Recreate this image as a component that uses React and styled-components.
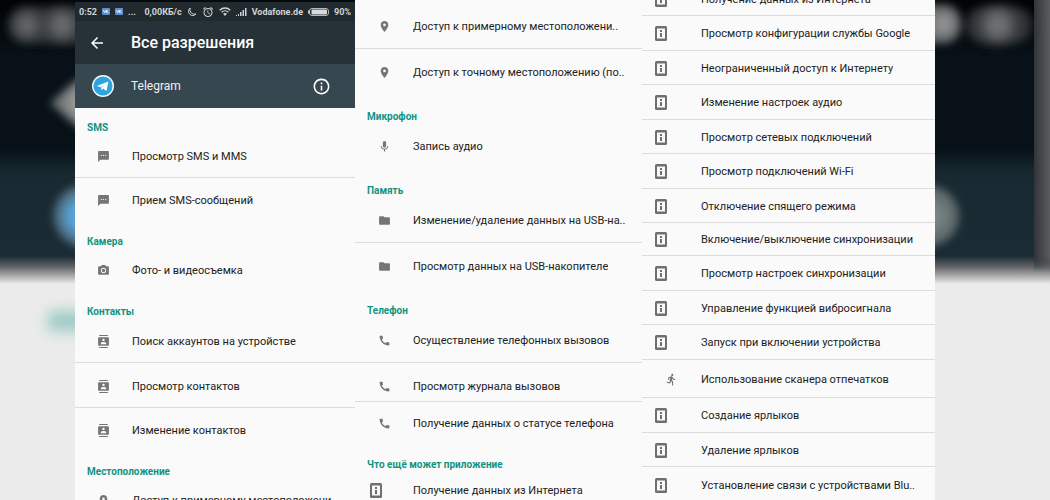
import styled, { createGlobalStyle } from "styled-components";
import {
  MdAlarm,
  MdArrowBack,
  MdCall,
  MdCameraAlt,
  MdContacts,
  MdDirectionsRun,
  MdFolder,
  MdInfoOutline,
  MdMic,
  MdPlace,
  MdTextsms,
} from "react-icons/md";

const GlobalStyle = createGlobalStyle`
  body {
    margin: 0;
    background: #ebebeb;
    font-family: Roboto, "Noto Sans", sans-serif;
  }
`;

const Page = styled.main`
  position: relative;
  height: 100vh;
  overflow: hidden;
  display: grid;
  grid-template-columns:
    minmax(0, 75fr) minmax(0, 280fr) minmax(0, 287fr) minmax(0, 293fr)
    minmax(0, 115fr);
`;

const Backdrop = styled.svg`
  position: absolute;
  inset: 0;
  width: 100%;
  height: 100%;
`;

const Column = styled.section`
  position: relative;
  background: #fafafa;
  overflow: hidden;
`;

const FirstColumn = styled(Column)`
  grid-column: 2;
  border-top: 2px solid #05090d;
`;

const MiddleColumn = styled(Column)`
  padding-top: 3px;
`;

const StatusBar = styled.div`
  height: 19px;
  padding: 0 4px;
  display: flex;
  align-items: center;
  justify-content: space-between;
  background: #212a2f;
  color: #cfd3d5;
  font-size: 9px;
  font-weight: 700;
  white-space: nowrap;
`;

const StatusGroup = styled.div`
  display: flex;
  align-items: center;
  gap: 5px;
`;

const AppBar = styled.header`
  height: 43px;
  padding-left: 13px;
  display: flex;
  align-items: center;
  gap: 25px;
  background: #263238;
  color: #fff;
`;

const BackButton = styled.button`
  display: flex;
  padding: 0;
  border: 0;
  background: none;
  color: inherit;
  font-size: 18px;
`;

const Title = styled.h1`
  margin: 0;
  font-size: 16px;
  font-weight: 500;
`;

const AppRow = styled.div`
  height: 44px;
  padding: 0 24px 0 17px;
  display: flex;
  align-items: center;
  gap: 17px;
  background: #37474f;
  color: #f0f2f3;
  font-size: 12px;
`;

const AppName = styled.span`
  flex: 1;
`;

const InfoButton = styled(BackButton)`
  color: #fff;
  font-size: 19px;
`;

const GroupTitle = styled.h2`
  box-sizing: border-box;
  height: ${(props) => props.$height}px;
  margin: 0;
  padding: ${(props) => props.$height - 12}px 12px 0;
  color: #109482;
  font-size: 10px;
  font-weight: 700;
  line-height: 12px;
  white-space: nowrap;
`;

const List = styled.ul`
  margin: 0;
  padding: 0;
  list-style: none;
`;

const WideList = styled(List)`
  margin-top: -18px;
`;

const Row = styled.li`
  box-sizing: border-box;
  height: ${(props) => props.$height}px;
  padding-top: ${(props) => props.$top}px;
  display: flex;
  align-items: center;
  border-bottom: 1px solid ${(props) => (props.$line ? "#dcdcdc" : "transparent")};
  color: #212121;
  font-size: 11px;
  white-space: nowrap;
`;

const IconCell = styled.span`
  flex: none;
  box-sizing: border-box;
  width: ${(props) => props.$width}px;
  padding-left: ${(props) => props.$indent}px;
  display: flex;
  color: #757575;
  font-size: 13px;
`;

const Label = styled.span`
  min-width: 0;
  overflow: hidden;
`;

function DeviceInfoIcon() {
  return (
    <svg width="12" height="15" viewBox="0 0 12 15" aria-hidden="true">
      <rect width="12" height="15" rx="1.5" fill="#6f6f6f" />
      <rect x="2" y="2.5" width="8" height="10" fill="#fafafa" />
      <rect x="5" y="4" width="2" height="2" fill="#6f6f6f" />
      <rect x="5" y="7" width="2" height="4" fill="#6f6f6f" />
    </svg>
  );
}

function TelegramLogo() {
  return (
    <svg width="22" height="22" viewBox="0 0 22 22" aria-hidden="true">
      <circle cx="11" cy="11" r="11" fill="#f4f9fc" />
      <circle cx="11" cy="11" r="9.6" fill="#2fa3dc" />
      <path d="M4.8 11 16.4 6.4 14.5 16l-3.4-2.4-1.7 1.7-.5-3Z" fill="#fff" />
      <path d="m8.9 12.3 5.2-4-4 4.5-.7 2.5Z" fill="#b9d9ec" />
    </svg>
  );
}

function VkBadge() {
  return (
    <svg width="8" height="7" viewBox="0 0 8 7" aria-hidden="true">
      <rect width="8" height="7" rx="1" fill="#5b8fd0" />
      <path d="M1.2 2.2 2.5 4.6 3.8 2.2M4.3 2v3M4.4 3.5 6.4 2.2M4.4 3.5 6.6 4.8" stroke="#fff" strokeWidth=".8" fill="none" />
    </svg>
  );
}

function MoonIcon() {
  return (
    <svg width="10" height="10" viewBox="0 0 10 10" aria-hidden="true">
      <path d="M3.2 1A4.2 4.2 0 1 0 9 7 4.6 4.6 0 0 1 3.2 1Z" fill="none" stroke="#cfd3d5" />
    </svg>
  );
}

function WifiIcon() {
  return (
    <svg width="12" height="9" viewBox="0 0 12 9" aria-hidden="true">
      <path d="M.7 3.2a7.6 7.6 0 0 1 10.6 0M2.6 5.2a5 5 0 0 1 6.8 0" fill="none" stroke="#cfd3d5" strokeWidth="1.4" />
      <path d="M4 6.8a3 3 0 0 1 4 0L6 9Z" fill="#cfd3d5" />
    </svg>
  );
}

function SignalIcon() {
  return (
    <svg width="11" height="8" viewBox="0 0 11 8" aria-hidden="true" fill="#cfd3d5">
      <rect y="7" width="1" height="1" />
      <rect x="2" y="6" width="1" height="2" />
      <rect x="4" y="4" width="1.5" height="4" />
      <rect x="6.5" y="2" width="1.5" height="6" />
      <rect x="9" width="1.5" height="8" />
    </svg>
  );
}

function BatteryIcon() {
  return (
    <svg width="21" height="8" viewBox="0 0 21 8" aria-hidden="true">
      <rect x="1.5" y=".5" width="19" height="7" rx="2.5" fill="none" stroke="#b4b9bb" />
      <rect x="3.5" y="1.5" width="15.5" height="5" rx="1" fill="#d8dbdc" />
      <rect y="2.5" width="1.5" height="3" fill="#cfd3d5" />
    </svg>
  );
}

const icons = {
  sms: MdTextsms,
  camera: MdCameraAlt,
  contacts: MdContacts,
  place: MdPlace,
  mic: MdMic,
  folder: MdFolder,
  call: MdCall,
  run: MdDirectionsRun,
  device: DeviceInfoIcon,
};

const firstGroups = [
  {
    title: "SMS",
    rows: [
      { icon: "sms", text: "Просмотр SMS и MMS", line: true },
      { icon: "sms", text: "Прием SMS-сообщений" },
    ],
  },
  { title: "Камера", rows: [{ icon: "camera", text: "Фото- и видеосъемка" }] },
  {
    title: "Контакты",
    rows: [
      { icon: "contacts", text: "Поиск аккаунтов на устройстве", line: true, height: 45 },
      { icon: "contacts", text: "Просмотр контактов", line: true, height: 45 },
      { icon: "contacts", text: "Изменение контактов", height: 44 },
    ],
  },
  {
    title: "Местоположение",
    rows: [{ icon: "place", text: "Доступ к примерному местоположени.." }],
  },
];

const middleGroups = [
  {
    rows: [
      { icon: "place", text: "Доступ к примерному местоположени..", line: true },
      { icon: "place", text: "Доступ к точному местоположению (по.." },
    ],
  },
  { title: "Микрофон", rows: [{ icon: "mic", text: "Запись аудио" }] },
  {
    title: "Память",
    rows: [
      { icon: "folder", text: "Изменение/удаление данных на USB-на..", line: true },
      { icon: "folder", text: "Просмотр данных на USB-накопителе" },
    ],
  },
  {
    title: "Телефон",
    rows: [
      { icon: "call", text: "Осуществление телефонных вызовов", line: true },
      { icon: "call", text: "Просмотр журнала вызовов", line: true, height: 39, top: 9 },
      { icon: "call", text: "Получение данных о статусе телефона", height: 41 },
    ],
  },
  {
    title: "Что ещё может приложение",
    rows: [{ icon: "device", text: "Получение данных из Интернета", height: 38, indent: 15 }],
  },
];

const otherRows = [
  { text: "Получение данных из Интернета", height: 34 },
  { text: "Просмотр конфигурации службы Google", height: 35 },
  { text: "Неограниченный доступ к Интернету", height: 34 },
  { text: "Изменение настроек аудио", height: 35 },
  { text: "Просмотр сетевых подключений", height: 34 },
  { text: "Просмотр подключений Wi-Fi", height: 35 },
  { text: "Отключение спящего режима", height: 34 },
  { text: "Включение/выключение синхронизации", height: 33 },
  { text: "Просмотр настроек синхронизации", height: 35 },
  { text: "Управление функцией вибросигнала", height: 34 },
  { text: "Запуск при включении устройства", height: 35 },
  { text: "Использование сканера отпечатков", height: 38, icon: "run", indent: 23 },
  { text: "Создание ярлыков", height: 35 },
  { text: "Удаление ярлыков", height: 34 },
  { text: "Установление связи с устройствами Blu..", height: 36 },
];

function PermissionRow({ icon = "device", text, line, height, top = 1, iconWidth, indent }) {
  const Icon = icons[icon];
  return (
    <Row $height={height} $top={top} $line={line}>
      <IconCell $width={iconWidth} $indent={indent}>
        <Icon />
      </IconCell>
      <Label>{text}</Label>
    </Row>
  );
}

function Groups({ groups, titleHeight, rowHeight, iconWidth, indent }) {
  return groups.map(({ title, rows }) => (
    <div key={title || "top"}>
      {title && <GroupTitle $height={titleHeight}>{title}</GroupTitle>}
      <List>
        {rows.map((row) => (
          <PermissionRow key={row.text} height={rowHeight} top={2} iconWidth={iconWidth} indent={indent} {...row} />
        ))}
      </List>
    </div>
  ));
}

function BlurredBackdrop() {
  return (
    <Backdrop viewBox="0 0 1050 500" preserveAspectRatio="none" aria-hidden="true">
      <defs>
        <filter id="soft" x="-50%" y="-50%" width="200%" height="200%">
          <feGaussianBlur stdDeviation="4" />
        </filter>
        <filter id="softer" x="-50%" y="-50%" width="200%" height="200%">
          <feGaussianBlur stdDeviation="7" />
        </filter>
        <linearGradient id="dark" x1="0" y1="0" x2="0" y2="1">
          <stop offset="0" stopColor="#010305" />
          <stop offset=".2" stopColor="#071117" />
          <stop offset=".52" stopColor="#071117" />
          <stop offset=".61" stopColor="#182931" />
          <stop offset=".9" stopColor="#1a2b34" />
          <stop offset=".94" stopColor="#626467" />
          <stop offset="1" stopColor="#ebebeb" />
        </linearGradient>
        <linearGradient id="edge" x1="0" y1="0" x2="1" y2="0">
          <stop offset="0" stopColor="#303438" />
          <stop offset="1" stopColor="#5c5e60" />
        </linearGradient>
        <linearGradient id="fade" x1="0" y1="0" x2="0" y2="1">
          <stop offset="0" stopColor="#fff" />
          <stop offset=".94" stopColor="#fff" />
          <stop offset="1" stopColor="#000" />
        </linearGradient>
        <mask id="edgeFade">
          <rect x="1034" width="16" height="272" fill="url(#fade)" />
        </mask>
      </defs>
      <rect width="1050" height="500" fill="#ebebeb" />
      <rect width="1050" height="284" fill="url(#dark)" />
      <rect x="1034" width="16" height="272" fill="url(#edge)" mask="url(#edgeFade)" />
      <g filter="url(#soft)">
        <rect x="9" y="7" width="90" height="36" rx="18" fill="#2f3234" />
        <rect x="910" y="5" width="50" height="38" rx="16" fill="#5f6264" />
        <rect x="966" y="7" width="66" height="36" rx="18" fill="#2f3234" />
        <path d="M50 103 90 70v66Z" fill="#707376" />
        <circle cx="85" cy="216" r="31" fill="#4b6270" />
        <circle cx="929" cy="216" r="30" fill="#5d686b" />
      </g>
      <g filter="url(#softer)">
        <circle cx="27" cy="25" r="12" fill="#6a6d6f" />
        <circle cx="62" cy="25" r="14" fill="#6a6d6f" />
        <circle cx="943" cy="24" r="11" fill="#9b9d9e" />
        <circle cx="998" cy="25" r="16" fill="#6f7173" />
        <circle cx="84" cy="103" r="16" fill="#a0a0a0" />
        <circle cx="84" cy="216" r="22" fill="#5aa6dc" />
        <circle cx="929" cy="216" r="18" fill="#7d8787" />
        <rect x="48" y="311" width="50" height="20" fill="#9ccbc4" />
      </g>
    </Backdrop>
  );
}

export default function App() {
  return (
    <>
      <GlobalStyle />
      <Page>
        <BlurredBackdrop />
        <FirstColumn>
          <StatusBar>
            <StatusGroup>
              <span>0:52</span>
              <VkBadge />
              <VkBadge />
              <span>...</span>
            </StatusGroup>
            <StatusGroup>
              <span>0,00КБ/с</span>
              <MoonIcon />
              <MdAlarm size={12} />
              <WifiIcon />
              <SignalIcon />
              <span>Vodafone.de</span>
              <BatteryIcon />
              <span>90%</span>
            </StatusGroup>
          </StatusBar>
          <AppBar>
            <BackButton aria-label="Назад">
              <MdArrowBack />
            </BackButton>
            <Title>Все разрешения</Title>
          </AppBar>
          <AppRow>
            <TelegramLogo />
            <AppName>Telegram</AppName>
            <InfoButton aria-label="О приложении">
              <MdInfoOutline />
            </InfoButton>
          </AppRow>
          <Groups groups={firstGroups} titleHeight={26} rowHeight={44} iconWidth={57} indent={22} />
        </FirstColumn>
        <MiddleColumn>
          <Groups groups={middleGroups} titleHeight={28} rowHeight={46} iconWidth={58} indent={23} />
        </MiddleColumn>
        <Column>
          <WideList>
            {otherRows.map((row) => (
              <PermissionRow key={row.text} line iconWidth={59} indent={13} {...row} />
            ))}
          </WideList>
        </Column>
      </Page>
    </>
  );
}
